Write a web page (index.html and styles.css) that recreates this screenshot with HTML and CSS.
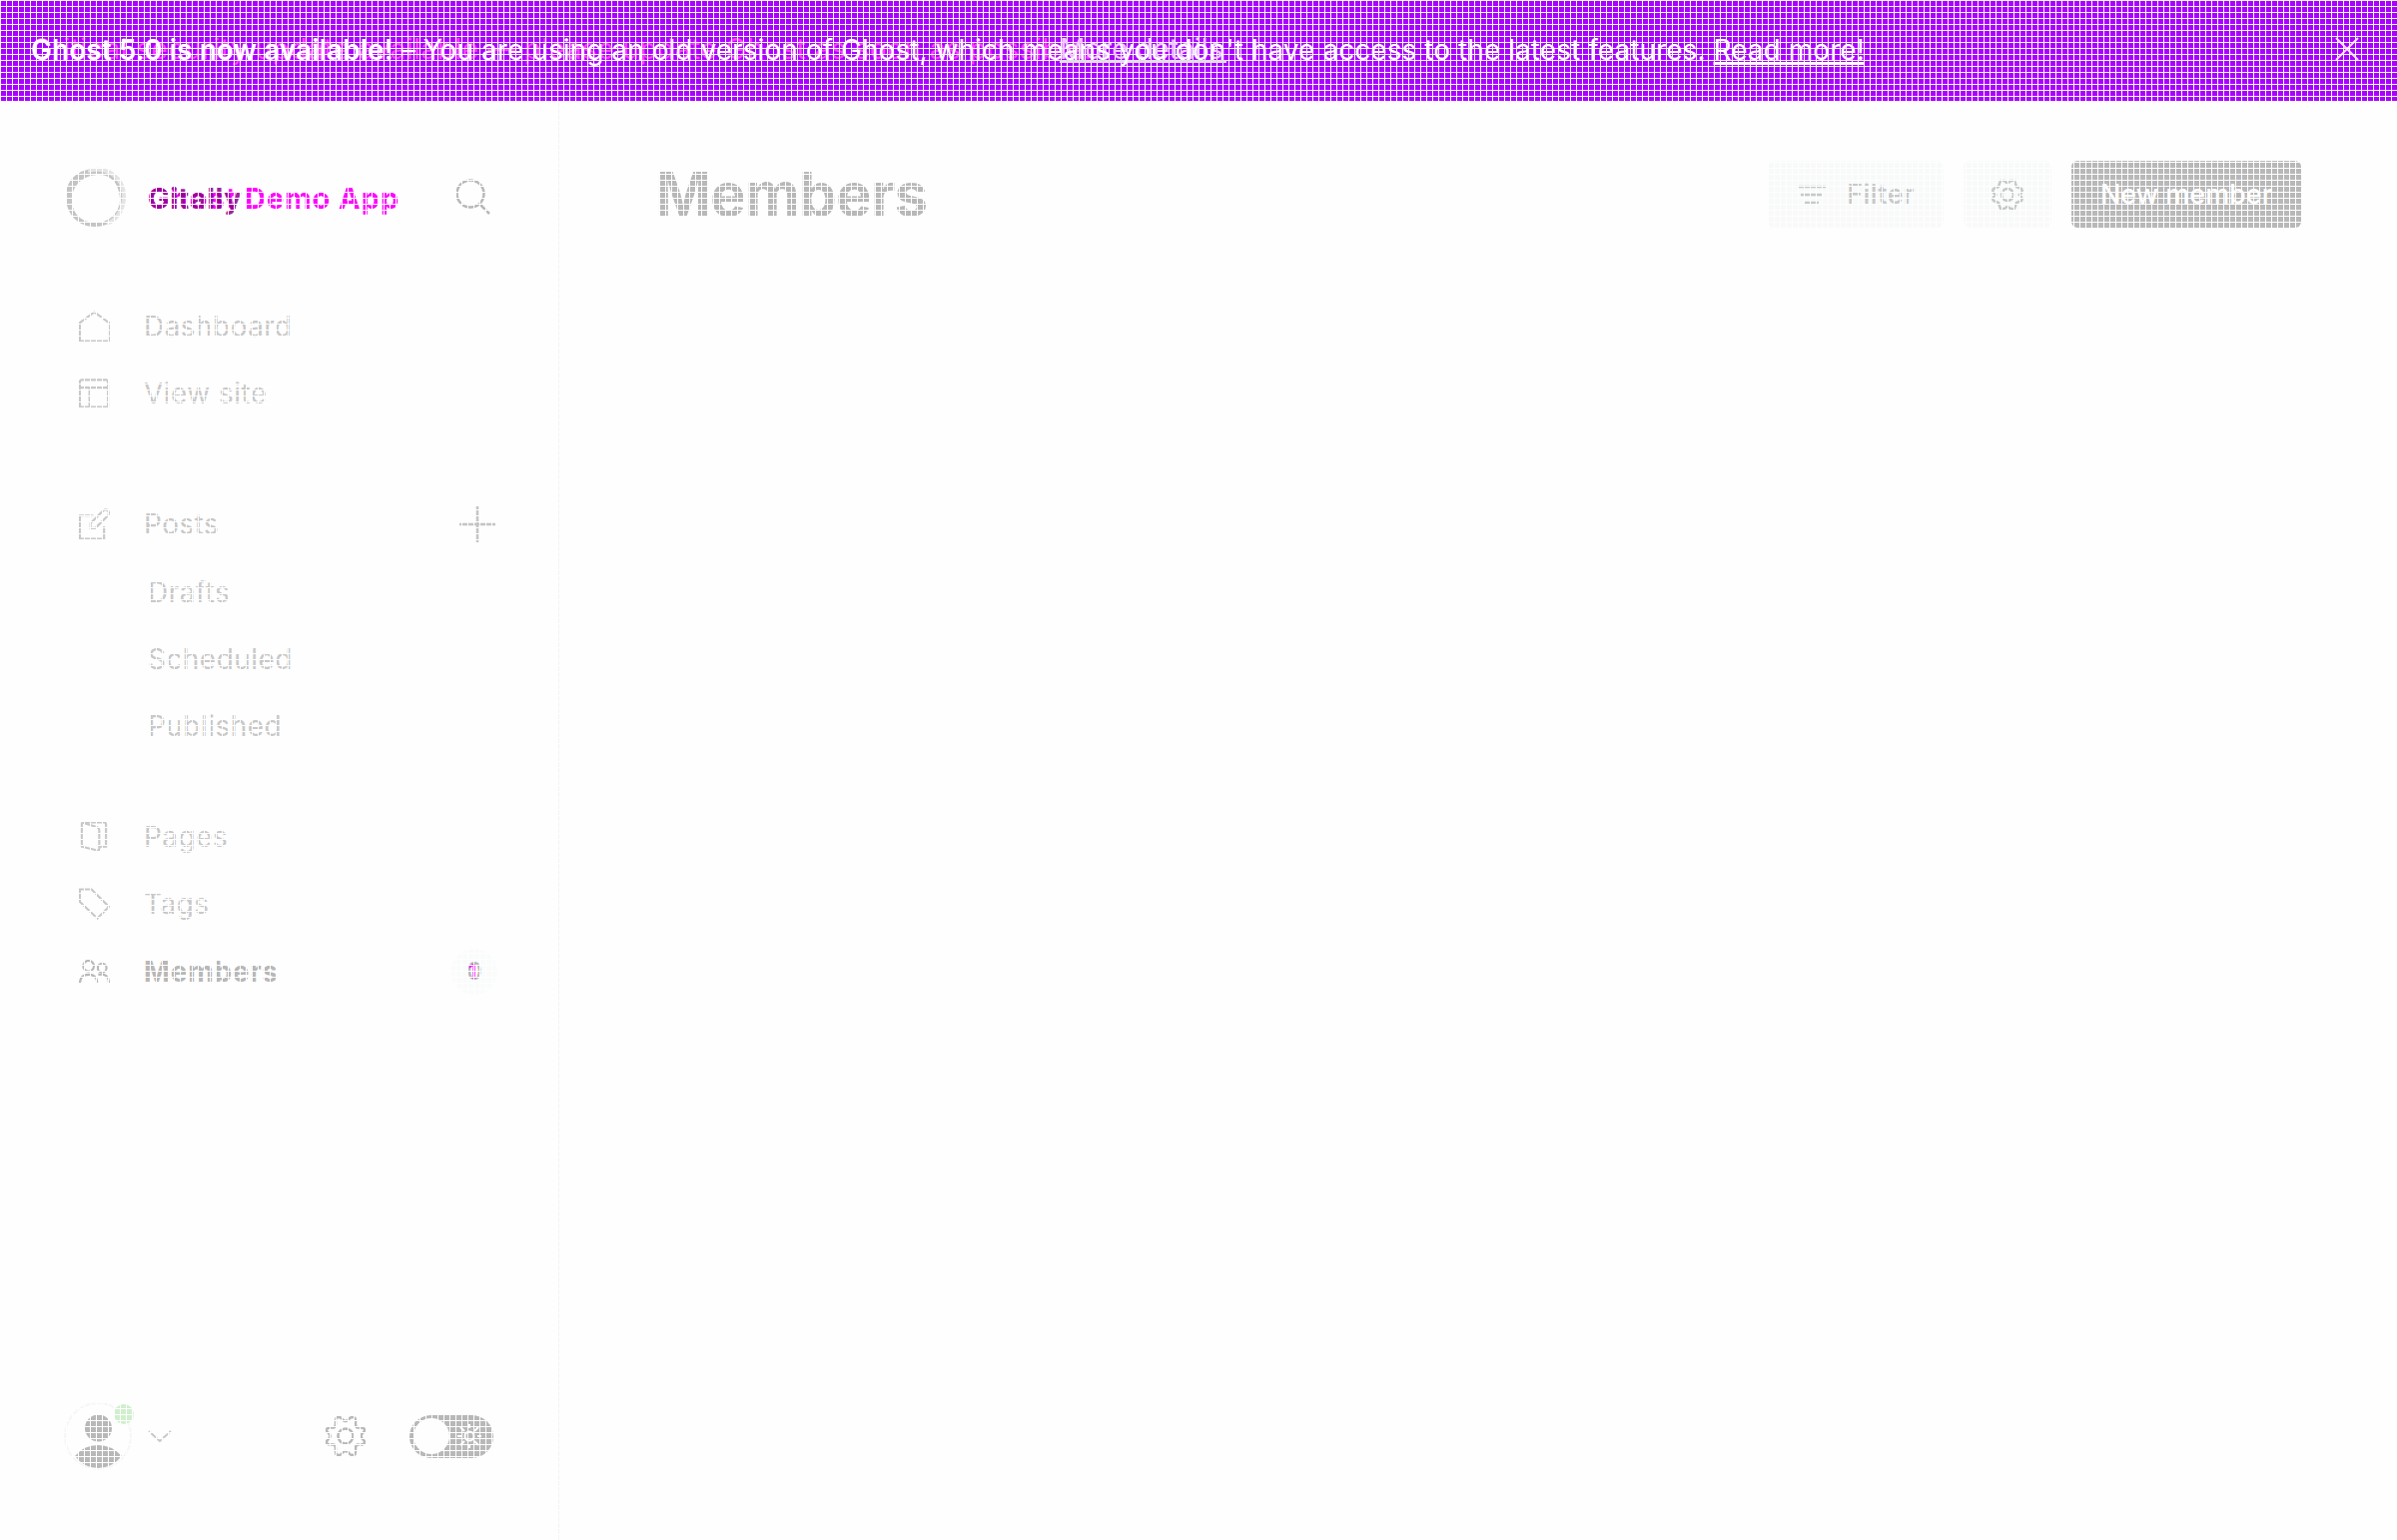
FILE: index.html
```html
<!DOCTYPE html>
<html lang="en">
<head>
<meta charset="utf-8">
<title>Members</title>
<link rel="stylesheet" href="styles.css">
</head>
<body>
<svg class="defs" width="0" height="0">
  <symbol id="gear" viewBox="0 0 40 40"><path d="M17 3.500C15 0 10 0 10 4v4q0 3-2 3.500H5C0 11.500 0 15 3 17q3 3 0 6c-3 2-3 5.500 2 5.500h3q2 .5 2 3.500v4c0 4 5 4 7 .5q3-3 6 0c2 3.500 7 3.500 7-.5v-4q0-3 2-3.500h3c5 0 5-3.500 2-5.500q-3-3 0-6c3-2 3-5.500-2-5.500h-3q-2-.5-2-3.500V4c0-4-5-4-7-.5q-3 3-6 0Z"/><circle cx="20" cy="20" r="7.5"/></symbol>
  <symbol id="gear-small" viewBox="0 0 32 32"><path d="M9 2h4q3 4 6 0h4l2 6 5 2q2 3-2 6 4 3 2 6l-5 2-2 6h-4q-3-4-6 0H9l-2-6-5-2q-2-3 2-6-4-3-2-6l5-2Z"/><circle cx="16" cy="16" r="6"/></symbol>
</svg>
<header class="banner">
  <p class="notice-old">Critical security update available — please update Ghost as soon as possible.</p>
  <p class="notice-link">More details</p>
  <p class="notice"><b>Ghost 5.0 is now available!</b> – <span class="notice-body">You are using an old version of Ghost, which means you don't have access to the latest features.</span> <a>Read more!</a></p>
  <svg class="close" viewBox="0 0 24 24"><path d="M1 1 23 23M23 1 1 23"/></svg>
</header>
<div class="app">
  <aside class="sidebar">
    <div class="brand">
      <svg class="logo" viewBox="0 0 62 60"><path fill-rule="evenodd" fill="#c4c4c4" d="M31 2C49 2 58 14 58 31S47 60 30 60 1 47 1 30 13 2 31 2ZM34 8C18 8 7 19 7 33s10 23 24 23 24-11 24-23S49 8 34 8Z"/><path fill="none" stroke="#e4e4e4" stroke-width="4" d="M23 4C42-1 60 10 59 32 58 45 50 54 42 57"/></svg>
      <div class="site"><span class="site-new">Ghost Demo App</span><span class="site-old">Gitally</span></div>
      <svg class="search" viewBox="0 0 36 36"><circle cx="15" cy="15" r="13.5"/><path d="m24 25 10 10"/></svg>
    </div>
    <nav>
      <ul class="top">
        <li><svg viewBox="0 0 32 32"><path d="M1 31V12L16 1l15 11v19Z"/></svg><span>Dashboard</span></li>
        <li><svg viewBox="0 0 32 32"><path d="M1 4q0-2 2-2h25q2 0 2 2v26H1ZM1 10h29M11 10v20"/></svg><span>View site</span></li>
      </ul>
      <ul class="posts">
        <li><svg viewBox="0 0 32 32"><path d="M15 7H1v24h25V18M12 20v-5L25 2q3-2 5 0t0 5L17 20Z"/></svg><span>Posts</span><svg class="plus" viewBox="0 0 36 36"><path d="M18 0v36M0 18h36"/></svg></li>
        <li class="sub">Drafts</li>
        <li class="sub">Scheduled</li>
        <li class="sub">Published</li>
      </ul>
      <ul class="content">
        <li><svg viewBox="0 0 32 32"><path d="M3 1v25l16 4q2 1 2-2V9q0-2-2-3L3 1h23q2 0 2 2v23h-7"/></svg><span>Pages</span></li>
        <li><svg viewBox="0 0 32 32"><path d="M1 1h12l18 18-12 12L1 14Z"/></svg><span>Tags</span></li>
        <li class="active"><svg viewBox="0 0 32 32"><circle cx="10" cy="10" r="5.5"/><circle cx="24" cy="12" r="4.5"/><path d="M1 28q0-9 9-9t9 9M20 19q11-2 11 9"/></svg><span>Members</span><div class="badge"><i>1</i>0</div></li>
      </ul>
    </nav>
    <footer>
      <div class="avatar"><svg viewBox="0 0 68 68"><circle class="ring" cx="34" cy="34" r="33"/><circle cx="34.500" cy="26" r="13.500"/><path d="M11 54Q20 43 34 43t24 11Q48 66 34 66T11 54Z"/></svg><span class="dot"></span></div>
      <svg class="chevron" viewBox="0 0 24 12"><path d="m1 1 11 10L23 1"/></svg>
      <svg class="settings"><use href="#gear"/></svg>
      <div class="toggle"><span class="knob"></span><svg viewBox="0 0 24 24"><circle cx="12" cy="12" r="4.500"/><path d="M12 0v4M12 20v4M0 12h4M20 12h4M3 3l4 4M17 17l4 4M3 21l4-4M17 7l4-4"/></svg></div>
    </footer>
  </aside>
  <main>
    <h1>Members</h1>
    <div class="actions">
      <div class="button filter"><svg viewBox="0 0 30 20"><path d="M1 2h28M4 10h21M8 18h14"/></svg><span>Filter</span></div>
      <div class="button options"><svg><use href="#gear-small"/></svg></div>
      <div class="button primary"><span>New member</span></div>
    </div>
  </main>
</div>
<div class="grid"></div>
</body>
</html>
```
FILE: styles.css
```css
* { box-sizing: border-box; }
body { margin: 0; width: 2400px; height: 1542px; overflow: hidden; position: relative; background: #fefefe; font: 28px/40px Inter, "Liberation Sans", sans-serif; color: #c8c8c8; }
p, h1, ul { margin: 0; padding: 0; }
ul { list-style: none; }
svg { display: block; fill: none; stroke: currentColor; stroke-width: 2; flex: none; }
.defs { position: absolute; }
.banner { height: 101px; background: #aa00ff; display: flex; align-items: center; justify-content: space-between; padding: 0 38px 0 31px; position: relative; }
.notice, .notice-old, .notice-link { white-space: nowrap; }
.notice { color: #fff; position: relative; z-index: 3; top: -1px; letter-spacing: .06px; }
.notice b { font-weight: 600; }
.notice a { text-decoration: underline; text-decoration-thickness: 3px; text-underline-offset: 2px; text-decoration-skip-ink: none; }
.notice-old { position: absolute; left: 31px; top: 29px; color: #ff3cff; letter-spacing: .5px; }
.notice-link { position: absolute; left: 1061px; top: 29px; width: 167px; height: 34px; color: #f0c8ff; border-bottom: 3px solid #e0e0e0; z-index: 3; }
.close { width: 24px; height: 24px; color: #ffd5ff; position: relative; top: -2px; }
.app { height: 1441px; display: flex; }
.sidebar { width: 560px; border-right: 1px solid #f3f4f4; display: flex; flex-direction: column; padding: 0 64px; }
.brand { height: 192px; display: flex; align-items: center; }
.logo { width: 62px; height: 60px; stroke: none; margin-left: 1px; }
.site { position: relative; margin-left: 21px; font-weight: 700; font-size: 29px; letter-spacing: .95px; flex: 1; white-space: nowrap; top: 2px; }
.site-new { color: #ff00ff; }
.site-old { position: absolute; left: 0; top: 0; color: #8b008b; opacity: .85; letter-spacing: .5px; }
.search { width: 36px; height: 36px; color: #b8b8b8; stroke-width: 2.5; margin-right: 3px; }
ul { padding: 0 0 0 15px; }
li { height: 67.3px; display: flex; align-items: center; letter-spacing: .45px; }
li svg { width: 31px; height: 32px; margin-right: 34px; stroke-width: 2.2; }
.posts { margin-top: 64px; }
.content { margin-top: 43.6px; }
li.sub { padding-left: 69px; }
li .plus { width: 36px; height: 36px; margin: 0 -1px 0 auto; color: #c4c4c4; stroke-width: 2.5; }
.active { color: #b8b8b8; font-weight: 700; letter-spacing: .7px; }
.badge { width: 46px; height: 46px; border-radius: 50%; background: #fafcfb; margin-left: auto; margin-right: -3px; text-align: center; font-size: 24px; line-height: 46px; font-weight: 500; letter-spacing: 0; position: relative; }
.badge i { position: absolute; left: 17px; color: #ff00ff; font-style: normal; font-size: 20px; }
footer { margin-top: auto; height: 68px; margin-bottom: 70px; display: flex; align-items: center; color: #b8b8b8; }
.avatar { position: relative; width: 68px; height: 68px; }
.avatar svg { width: 68px; height: 68px; fill: #b8b8b8; stroke: none; }
.avatar .ring { fill: none; stroke: #f6f6f6; stroke-width: 2; }
.dot { position: absolute; left: 50px; top: 2px; width: 20px; height: 20px; border-radius: 50%; background: #d0efcd; }
.chevron { width: 24px; height: 12px; margin-left: 16px; color: #c8c8c8; }
.settings { width: 40px; height: 40px; margin-left: 154px; stroke-width: 2.5; }
.toggle { width: 84px; height: 43px; border-radius: 22px; background: #b8b8b8; margin-left: 44px; display: flex; align-items: center; padding: 0 12px 0 4px; justify-content: space-between; color: #fefefe; }
.knob { width: 36px; height: 36px; border-radius: 50%; background: #fefefe; }
.toggle svg { width: 24px; height: 24px; }
main { flex: 1; display: flex; justify-content: space-between; padding: 60px 96px 0 96px; align-items: flex-start; }
h1 { font-size: 60px; line-height: 66px; font-weight: 700; color: #b8b8b8; letter-spacing: -.8px; }
.actions { display: flex; gap: 20px; }
.button { height: 67px; border-radius: 6px; background: #f8faf9; display: flex; align-items: center; justify-content: center; font-weight: 500; font-size: 27px; color: #c6c8ca; }
.filter { width: 176px; gap: 20px; letter-spacing: .4px; }
.filter svg { width: 30px; height: 20px; stroke-width: 2.5; }
.options { width: 88px; }
.options svg { width: 32px; height: 32px; stroke-width: 2.5; }
.primary { width: 230px; background: #b8b8b8; color: #fff; }
.grid { position: absolute; inset: 0; z-index: 2; pointer-events: none; background: repeating-linear-gradient(90deg, #fefefe 0 1px, transparent 1px 6px), repeating-linear-gradient(#fefefe 0 1px, transparent 1px 6px); }
```
